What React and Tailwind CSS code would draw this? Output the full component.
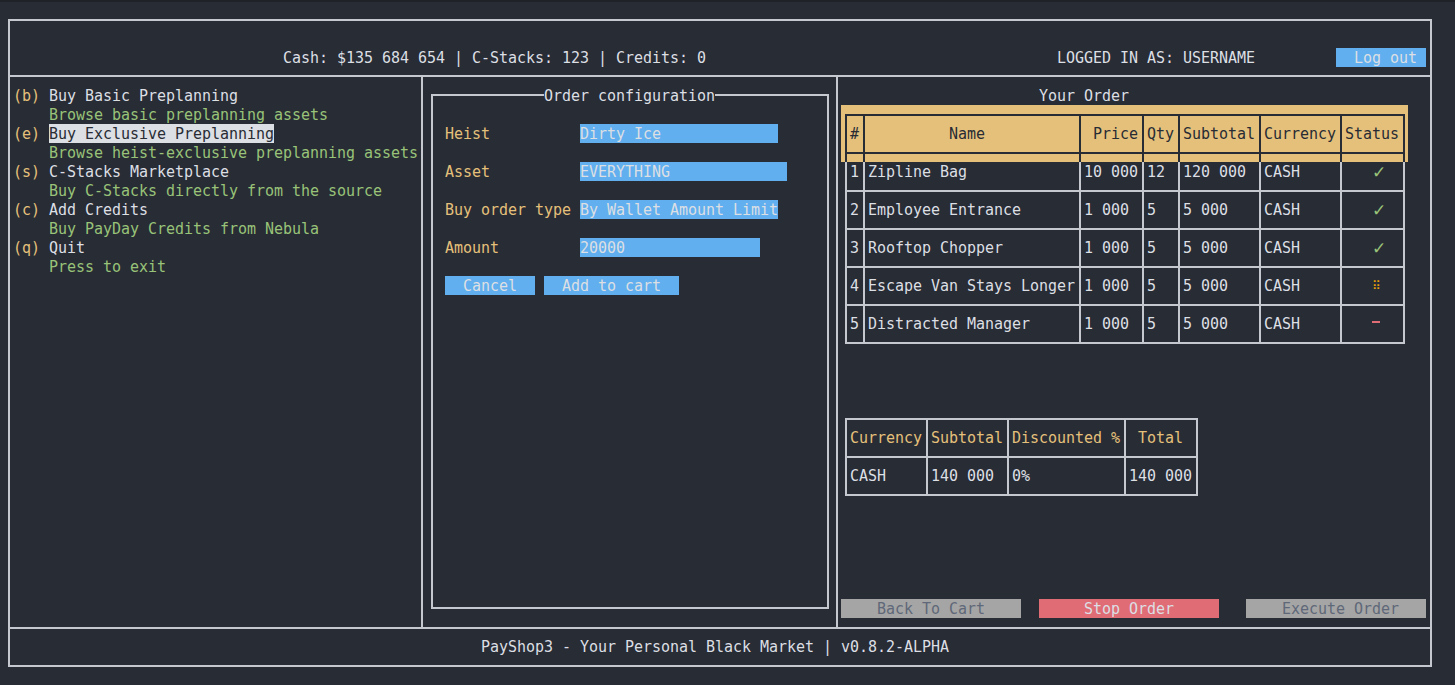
import React from 'react';

const menu = [
  { key: '(b)', label: 'Buy Basic Preplanning', desc: 'Browse basic preplanning assets' },
  { key: '(e)', label: 'Buy Exclusive Preplanning', desc: 'Browse heist-exclusive preplanning assets', active: true },
  { key: '(s)', label: 'C-Stacks Marketplace', desc: 'Buy C-Stacks directly from the source' },
  { key: '(c)', label: 'Add Credits', desc: 'Buy PayDay Credits from Nebula' },
  { key: '(q)', label: 'Quit', desc: 'Press to exit' },
];

const fields = [
  { label: 'Heist', value: 'Dirty Ice', width: 'w-[198px]' },
  { label: 'Asset', value: 'EVERYTHING', width: 'w-[207px]' },
  { label: 'Buy order type', value: 'By Wallet Amount Limit', width: 'w-[198px]' },
  { label: 'Amount', value: '20000', width: 'w-[180px]' },
];

const orders = [
  { n: '1', name: 'Zipline Bag', price: '10 000', qty: '12', subtotal: '120 000', status: 'done' },
  { n: '2', name: 'Employee Entrance', price: '1 000', qty: '5', subtotal: '5 000', status: 'done' },
  { n: '3', name: 'Rooftop Chopper', price: '1 000', qty: '5', subtotal: '5 000', status: 'done' },
  { n: '4', name: 'Escape Van Stays Longer', price: '1 000', qty: '5', subtotal: '5 000', status: 'busy' },
  { n: '5', name: 'Distracted Manager', price: '1 000', qty: '5', subtotal: '5 000', status: 'todo' },
];

// widths between the box-drawing lines, one terminal cell = 9px
const cols = ['w-[18px]', 'w-[216px]', 'w-[63px]', 'w-[36px]', 'w-[81px]', 'w-[81px]', 'w-[65px]'];

function StatusMark({ status }) {
  if (status === 'done')
    return <span className="text-[#98c379] text-[17px] font-['DejaVu_Sans',sans-serif]">✓</span>;
  if (status === 'busy') return <span className="text-[#e5a00b] text-[12px]">⠿</span>;
  return <span className="inline-block w-[8px] h-[2px] mb-[5px] bg-[#e06c75]" />;
}

function OrderTable() {
  const header = ['#', 'Name', 'Price', 'Qty', 'Subtotal', 'Currency', 'Status'];
  return (
    <div className="flex flex-col">
      <div className="ml-[3px] w-[567px] bg-[#e5c07b] pt-[9px] pl-[4px] text-[#282c34]">
        <div className="flex w-[560px] border-y-2 border-[#282c34]">
          {header.map((h, i) => (
            <div
              key={h}
              className={`${cols[i]} border-l-2 border-[#282c34] pt-[9px] pb-[8px] whitespace-pre ${
                i === 6 ? 'border-r-2' : ''
              } ${i === 1 ? 'pl-[84px]' : i === 2 ? 'text-right pr-[4px]' : 'pl-[3px]'}`}
            >
              {h}
            </div>
          ))}
        </div>
        <div className="flex w-[560px] h-[8px]">
          {cols.map((w, i) => (
            <div key={i} className={`${w} border-l-2 border-[#282c34] ${i === 6 ? 'border-r-2' : ''}`} />
          ))}
        </div>
      </div>
      <div className="ml-[7px] w-[560px] flex flex-col">
        {orders.map((o, r) => {
          const cells = [o.n, o.name, o.price, o.qty, o.subtotal, 'CASH'];
          return (
            <div
              key={o.n}
              className={`flex border-[#c5c8ce] ${r === 0 ? '' : 'border-t-2'} ${r === orders.length - 1 ? 'border-b-2' : ''}`}
            >
              {cells.map((c, i) => (
                <div
                  key={i}
                  className={`${cols[i]} border-l-2 border-[#c5c8ce] pl-[3px] pb-[8px] whitespace-pre ${
                    r === 0 ? 'pt-[1px]' : 'pt-[9px]'
                  }`}
                >
                  {c}
                </div>
              ))}
              <div
                className={`${cols[6]} border-x-2 border-[#c5c8ce] pl-[30px] pb-[8px] h-full flex items-center ${
                  r === 0 ? 'pt-[1px]' : 'pt-[9px]'
                }`}
              >
                <div className="h-[19px] flex items-center">
                  <StatusMark status={o.status} />
                </div>
              </div>
            </div>
          );
        })}
      </div>
    </div>
  );
}

function SummaryTable() {
  const w = ['w-[81px]', 'w-[81px]', 'w-[117px]', 'w-[74px]'];
  const head = ['Currency', 'Subtotal', 'Discounted %', 'Total'];
  const row = ['CASH', '140 000', '0%', '140 000'];
  return (
    <div className="ml-[7px] mt-[74px] w-[353px] flex flex-col border-y-2 border-[#c5c8ce]">
      <div className="flex border-b-2 border-[#c5c8ce] text-[#e5c07b]">
        {head.map((h, i) => (
          <div
            key={h}
            className={`${w[i]} border-l-2 border-[#c5c8ce] pt-[9px] pb-[8px] whitespace-pre ${
              i === 3 ? 'border-r-2 pl-[12px]' : 'pl-[3px]'
            }`}
          >
            {h}
          </div>
        ))}
      </div>
      <div className="flex">
        {row.map((c, i) => (
          <div
            key={i}
            className={`${w[i]} border-l-2 border-[#c5c8ce] pl-[3px] pt-[9px] pb-[8px] whitespace-pre ${
              i === 3 ? 'border-r-2' : ''
            }`}
          >
            {c}
          </div>
        ))}
      </div>
    </div>
  );
}

export default function App() {
  return (
    <div className="w-[1455px] h-[685px] overflow-hidden bg-[#282c34] border-t-2 border-[#1f2227] pt-[17px] pl-[8px] font-['DejaVu_Sans_Mono',monospace] text-[15px] leading-[19px] tracking-[-0.03px] text-[#dcdfe4]">
      <div className="w-[1424px] h-[648px] border-2 border-[#c5c8ce] flex flex-col">
        {/* status bar */}
        <div className="h-[56px] border-b-2 border-[#c5c8ce] flex items-start pt-[27px] whitespace-pre">
          <span className="ml-[273px] pt-[1px]">Cash: $135 684 654 | C-Stacks: 123 | Credits: 0</span>
          <span className="ml-[351px] pt-[1px]">LOGGED IN AS: USERNAME</span>
          <span className="ml-[81px] w-[90px] h-[19px] pl-[18px] pt-[1px] bg-[#61afef]">Log out</span>
        </div>

        <div className="h-[550px] flex">
          {/* menu */}
          <div className="w-[413px] border-r-2 border-[#c5c8ce] pt-[9px] pl-[3px] flex flex-col whitespace-pre">
            {menu.map((m) => (
              <div key={m.key} className="flex flex-col">
                <div className="flex h-[19px]">
                  <span className="text-[#e5c07b] pt-[1px]">{m.key} </span>
                  <span className={`pt-[1px] ${m.active ? 'bg-[#dcdfe4] text-[#282c34]' : ''}`}>{m.label}</span>
                </div>
                <div className="h-[19px] pt-[1px] pl-[36px] text-[#98c379]">{m.desc}</div>
              </div>
            ))}
          </div>

          {/* order configuration */}
          <div className="w-[415px] border-r-2 border-[#c5c8ce] pt-[9px] pl-[8px]">
            <div className="w-[398px] flex flex-col">
              <div className="flex h-[19px]">
                <div className="w-[113px] h-[11px] self-end border-t-2 border-l-2 border-[#c5c8ce]" />
                <span className="w-[171px] pt-[1px] whitespace-pre">Order configuration</span>
                <div className="flex-1 h-[11px] self-end border-t-2 border-r-2 border-[#c5c8ce]" />
              </div>
              <div className="h-[504px] border-x-2 border-b-2 border-[#c5c8ce] pt-[19px] pl-[12px] flex flex-col gap-[19px] whitespace-pre">
                {fields.map((f) => (
                  <div key={f.label} className="flex h-[19px]">
                    <span className="w-[135px] pt-[1px] text-[#e5c07b]">{f.label}</span>
                    <span className={`${f.width} pt-[1px] bg-[#61afef]`}>{f.value}</span>
                  </div>
                ))}
                <div className="flex gap-[9px] h-[19px]">
                  <span className="w-[90px] pl-[18px] pt-[1px] bg-[#61afef]">Cancel</span>
                  <span className="w-[135px] pl-[18px] pt-[1px] bg-[#61afef]">Add to cart</span>
                </div>
              </div>
            </div>
          </div>

          {/* your order */}
          <div className="flex-1 pt-[9px] flex flex-col">
            <div className="h-[19px] pt-[1px] pl-[201px] whitespace-pre">Your Order</div>
            <OrderTable />
            <SummaryTable />
            <div className="flex-1" />
            <div className="flex h-[19px] ml-[3px] mb-[9px] whitespace-pre">
              <span className="w-[180px] pl-[36px] pt-[1px] bg-[#a5a5a5] text-[#5f6878]">Back To Cart</span>
              <span className="ml-[18px] w-[180px] pl-[45px] pt-[1px] bg-[#e06c75]">Stop Order</span>
              <span className="ml-[27px] w-[180px] pl-[36px] pt-[1px] bg-[#a5a5a5] text-[#5f6878]">Execute Order</span>
            </div>
          </div>
        </div>

        <div className="h-[38px] border-t-2 border-[#c5c8ce] pt-[9px] pl-[471px] whitespace-pre">
          PayShop3 - Your Personal Black Market | v0.8.2-ALPHA
        </div>
      </div>
    </div>
  );
}
